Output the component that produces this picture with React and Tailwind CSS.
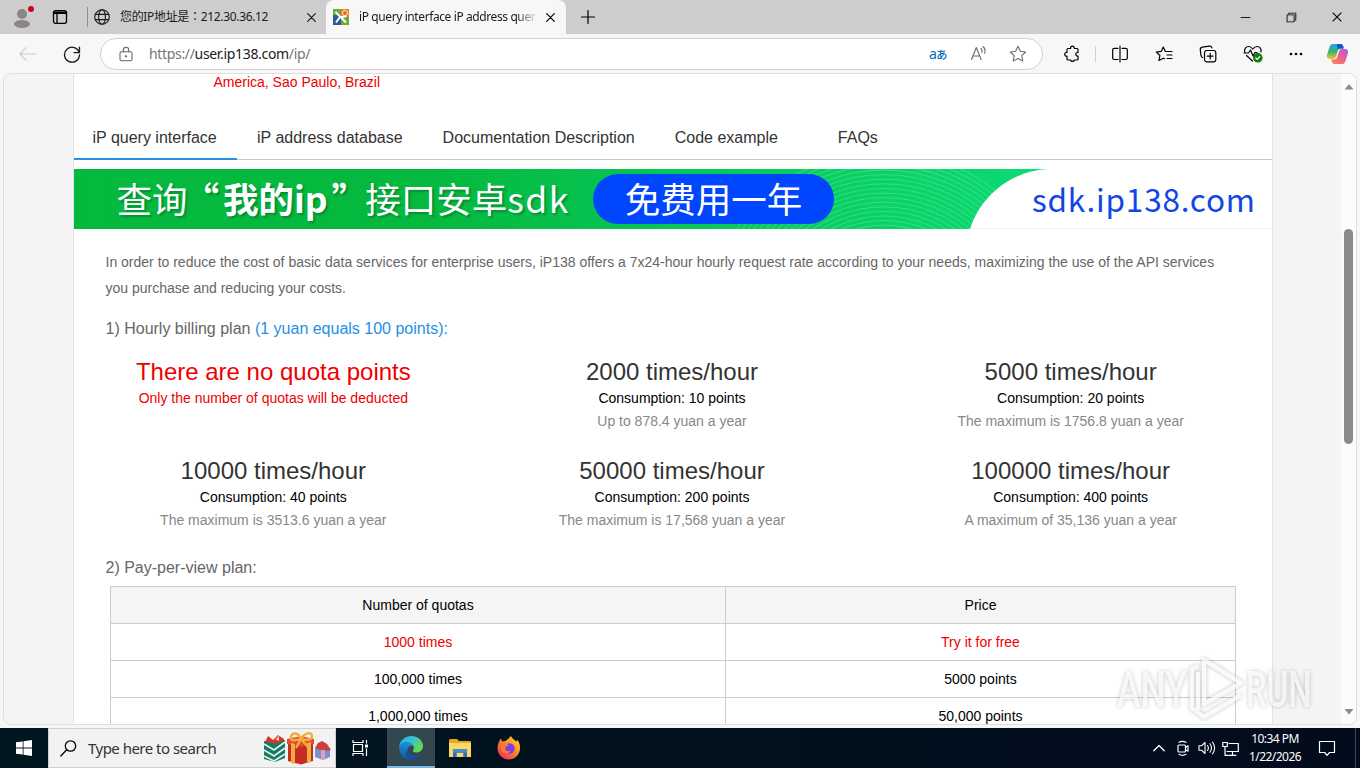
import React from 'react';
import {
  VscChromeMinimize,
  VscChromeRestore,
  VscChromeClose,
} from 'react-icons/vsc';

const navItems = ['iP query interface', 'iP address database', 'Documentation Description', 'Code example', 'FAQs'];

const plans = [
  { title: 'There are no quota points', cost: 'Only the number of quotas will be deducted', free: true },
  { title: '2000 times/hour', cost: 'Consumption: 10 points', max: 'Up to 878.4 yuan a year' },
  { title: '5000 times/hour', cost: 'Consumption: 20 points', max: 'The maximum is 1756.8 yuan a year' },
  { title: '10000 times/hour', cost: 'Consumption: 40 points', max: 'The maximum is 3513.6 yuan a year' },
  { title: '50000 times/hour', cost: 'Consumption: 200 points', max: 'The maximum is 17,568 yuan a year' },
  { title: '100000 times/hour', cost: 'Consumption: 400 points', max: 'A maximum of 35,136 yuan a year' },
];

const quotas = [
  { count: '1000 times', price: 'Try it for free', free: true },
  { count: '100,000 times', price: '5000 points' },
  { count: '1,000,000 times', price: '50,000 points' },
];

// radii of the thin arcs drawn on the right half of the banner
const waves = Array.from({ length: 20 }, (_, i) => 92 + i * 4.6);

function Line({ size = 20, className = '', width = 1.2, box = 20, children }) {
  return (
    <svg
      width={size}
      height={size}
      viewBox={`0 0 ${box} ${box}`}
      fill="none"
      stroke="currentColor"
      strokeWidth={width}
      strokeLinecap="round"
      strokeLinejoin="round"
      className={`block shrink-0 ${className}`}
    >
      {children}
    </svg>
  );
}

function TabBar() {
  return (
    <div className="flex h-[34px] bg-[#cdcdcd] text-[#1b1b1b] font-['Noto_Sans','Noto_Sans_CJK_TC',sans-serif] text-xs">
      <div className="flex w-[88px] items-center pl-3">
        <svg width="24" height="26" viewBox="0 0 24 26" className="block">
          <circle cx="10" cy="10" r="5" fill="#8b8684" />
          <ellipse cx="10" cy="20" rx="8" ry="4" fill="#8b8684" />
          <circle cx="19" cy="5" r="3" fill="#d0021b" />
        </svg>
        <Line size={16} box={16} width={1.3} className="ml-4 text-black">
          <rect x="1.5" y="1.7" width="13" height="12.6" rx="2" />
          <path d="M1.5 3.2h13M1.8 4.4h12.4M5 5v9" />
        </Line>
      </div>
      <div className="flex w-[238px] items-center rounded-br-lg">
        <span className="h-5 w-px shrink-0 bg-[#8f8f8f] -ml-px" />
        <Line size={16} box={16} width={1.1} className="ml-[6px]">
          <circle cx="8" cy="8" r="7.3" />
          <ellipse cx="8" cy="8" rx="3.4" ry="7.3" />
          <path d="M1.3 5.4h13.4M1.3 10.6h13.4" />
        </Line>
        <span className="ml-[10px] w-[180px] whitespace-nowrap tracking-[-0.33px]">您的IP地址是：212.30.36.12</span>
        <Line size={9} box={9} width={1.2} className="ml-[7px]">
          <path d="M.7.7l7.6 7.6M8.3.7L.7 8.3" />
        </Line>
      </div>
      <div className="flex w-[240px] items-center rounded-t-lg bg-[#f7f7f7] pl-[7px]">
        <svg width="16" height="16" viewBox="0 0 16 16" className="block shrink-0">
          <path fill="#6cab35" d="M0 0h9v8H0z" />
          <path fill="#285a9c" d="M0 6h8v10H0z" />
          <path fill="#6cab35" d="M8 8h8v8H8z" />
          <path fill="#ef7d2c" d="M8 0h8v8H8z" />
          <path stroke="#fff" strokeWidth="2" d="M2.5 3l4 4 6.5 6.5M7 8l-4 5.5M7.5 8.5l6-1.5" fill="none" />
          <circle cx="12" cy="4" r="2.6" fill="#ef6b22" stroke="#fff" strokeWidth=".8" />
        </svg>
        <span className="ml-[10px] w-[179px] whitespace-nowrap tracking-[-0.4px] [mask-image:linear-gradient(to_right,black_88%,transparent)]">
          iP query interface iP address quer
        </span>
        <Line size={9} box={9} width={1.2} className="ml-[8px] text-black">
          <path d="M.7.7l7.6 7.6M8.3.7L.7 8.3" />
        </Line>
      </div>
      <div className="flex flex-1 items-center pl-[15px]">
        <Line size={14} box={14} width={1.2} className="text-black">
          <path d="M7 .5v13M.5 7h13" />
        </Line>
      </div>
      <div className="flex items-center gap-[32px] pr-4 text-sm text-black">
        <VscChromeMinimize />
        <VscChromeRestore />
        <VscChromeClose />
      </div>
    </div>
  );
}

function Toolbar() {
  return (
    <div className="flex h-[39px] items-center bg-[#f7f7f7] text-[#1b1b1b]">
      <Line size={18} className="ml-[19px] text-[#c9c9c9]">
        <path d="M19 10H1M8 3l-7 7 7 7" />
      </Line>
      <Line size={18} width={1.5} className="ml-[26px]">
        <path d="M18 8.5A8.3 8.3 0 1 0 18.3 11M18.3 2.5v6h-6" />
      </Line>
      <div className="ml-[19px] flex h-8 w-[943px] shrink-0 items-center rounded-full border border-[#d2d2d2] bg-white pl-[18px] font-['Noto_Sans',sans-serif] text-sm">
        <Line size={14} box={14} width={1.1} className="h-4 text-[#666]">
          <rect x="1" y="4.8" width="12" height="9" rx="1.6" />
          <path d="M4.3 4.8V3a2.7 2.7 0 0 1 5.4 0v1.8" />
          <circle cx="7" cy="9.3" r=".6" fill="currentColor" />
        </Line>
        <span className="ml-4 flex-1 whitespace-nowrap tracking-[-0.33px] text-[#767676]">
          https://<span className="text-[#1b1b1b]">user.ip138.com</span>/ip/
        </span>
        <span className="w-[41px] text-[14px] leading-none tracking-[-0.7px] text-[#0067c0] font-['Noto_Sans','Noto_Sans_CJK_JP',sans-serif]">
          a<span className="text-[11px] font-medium">あ</span>
        </span>
        <Line size={17} box={17} width={1.1} className="text-[#6b6b6b]">
          <path d="M1.5 14.5L6.3 2.5l4.8 12M3 11h6.5M11 3.5q1.6 1.5 1 4M13 1.5q3 2.8 1.6 6.8" />
        </Line>
        <Line size={18} width={1.2} className="ml-[22px] mr-[15px] text-[#6b6b6b]">
          <path d="M10 1.5l2.6 5.5 6 .8-4.4 4.1 1.1 6-5.3-2.9-5.3 2.9 1.1-6L1.4 7.800l6-.8z" />
        </Line>
      </div>
      <Line size={18} box={18} width={1.2} className="ml-5 text-black">
        <path d="M5 3.5h2.600a1.900 1.900 0 1 1 3.700 0H14a1 1 0 0 1 1 1V7.500h-.8a1.900 1.900 0 0 0 0 3.700h.8V14a1 1 0 0 1-1 1h-2.700a1.900 1.900 0 0 1-3.700 0H5a1 1 0 0 1-1-1v-2.800a1.900 1.900 0 1 1 0-3.700v-3a1 1 0 0 1 1-1z" />
      </Line>
      <span className="ml-[14px] h-4 w-px bg-[#cfcfcf]" />
      <Line size={18} box={18} width={1.2} className="ml-[15px] text-black">
        <path d="M9 1v16M7 3.300H3.200a1.500 1.500 0 0 0-1.500 1.500v8.200a1.500 1.500 0 0 0 1.500 1.500H7M11 3.300h3.800a1.500 1.500 0 0 1 1.500 1.500v8.200a1.500 1.500 0 0 1-1.500 1.500H11" />
      </Line>
      <Line size={18} box={18} width={1.2} className="ml-[26px] text-black">
        <path d="M10.500 6.500h6.500M12 10h5M12 13.500h5M10.300 6.500L8.300 2 6.200 6.400l-4.900.7 3.600 3.400-.9 5 4.300-2.300 1.200.6" />
      </Line>
      <Line size={18} box={18} width={1.2} className="ml-[26px] text-black">
        <rect x="5.500" y="5.500" width="11.300" height="11.300" rx="2.200" />
        <path d="M11.200 8.300v5.700M8.300 11.200h5.700M3.400 12.600A3 3 0 0 1 2 10.700L1.300 5A2.500 2.500 0 0 1 3.400 2.200l6.900-1a2.500 2.500 0 0 1 2.700 1.700" />
      </Line>
      <Line size={20} box={20} width={1.2} className="ml-[26px] text-black">
        <path d="M1.800 8.500C.8 5 3 2.500 5.700 2.500c2 0 3.300 1.500 4.100 2.500.8-1 2.200-2.500 4.300-2.500 2.500 0 4.700 2.500 3.800 5.500M3.500 11.500l6 5.500M1 9h4.500l2-3 2.500 6 2-3.500h2" />
        <circle cx="14.800" cy="13.800" r="4.200" fill="#107c10" stroke="#107c10" />
        <path d="M12.800 14l1.400 1.400 2.600-2.700" stroke="#fff" />
      </Line>
      <svg width="14" height="4" viewBox="0 0 14 4" className="ml-[26px] block shrink-0">
        <circle cx="2" cy="2" r="1.300" /><circle cx="7" cy="2" r="1.300" /><circle cx="12" cy="2" r="1.300" />
      </svg>
      <svg width="23" height="22" viewBox="0 0 23 22" className="ml-[23px] block shrink-0">
        <defs>
          <linearGradient id="cpa" x1="0" y1="0" x2="0" y2="1">
            <stop offset="0" stopColor="#1aa6e8" />
            <stop offset=".5" stopColor="#3bb56a" />
            <stop offset="1" stopColor="#f6c32b" />
          </linearGradient>
          <linearGradient id="cpb" x1="1" y1="0" x2="0" y2="1">
            <stop offset="0" stopColor="#a45cf0" />
            <stop offset=".5" stopColor="#f0618f" />
            <stop offset="1" stopColor="#fb8a3c" />
          </linearGradient>
        </defs>
        <path d="M7 1h7.500q2 0 2.600 2l.6 2.500h-3q-2 0-2.700 2L9.800 14q-.7 2-2.600 2H4Q.4 16 1 12L3.500 4Q4.500 1 7 1z" fill="url(#cpa)" />
        <path d="M11 1h3.500q2 0 2.600 2l.7 2.500h-3.300q-2 0-2.700 1z" fill="#1c4fd0" />
        <path d="M16 21H8.500q-2 0-2.600-2l-.6-2.500h3q2 0 2.700-2L13.200 8q.7-2 2.600-2H19q3.600 0 3 4l-2.500 8q-1 3-3.500 3z" fill="url(#cpb)" />
      </svg>
    </div>
  );
}

function Banner() {
  return (
    <div className="relative mt-[9px] h-[60px] overflow-hidden bg-linear-to-r from-[#05b93f] from-30% to-[#0cda73] to-80% font-['Noto_Sans_CJK_SC',sans-serif] text-[35.5px] leading-[56px] whitespace-nowrap">
      <svg width="1198" height="60" viewBox="0 0 1198 60" className="absolute inset-0">
        <g fill="none" stroke="#7af0ae" strokeOpacity=".5" strokeWidth=".8">
          {waves.map((r) => (
            <circle key={r} cx="810" cy="162" r={r} />
          ))}
        </g>
        <path d="M896 60C906 28 936 2 974 0h224v60z" fill="#fff" />
        <path d="M897 59.500h301" stroke="#f3f3f3" />
      </svg>
      <div className="relative flex h-full items-center text-white">
        <div className="-mt-0.5 ml-[42.5px] w-[476.5px] [text-shadow:2px_2px_2px_rgba(0,90,30,0.45)]">
          查询
          <span className="font-bold">
            <span className="-ml-[4px] mr-[4px]">“</span>我的ip<span className="ml-[4px] -mr-[2px]">”</span>
          </span>
          接口安卓<span className="tracking-[1.5px]">sdk</span>
        </div>
        <div className="h-[50px] w-[241px] rounded-full bg-[#0146ff] text-center leading-[48px]">免费用一年</div>
        <div className="-mt-0.5 ml-[198px] text-[31.5px] tracking-[0.8px] text-[#1145e6]">sdk.ip138.com</div>
      </div>
    </div>
  );
}

function PageContent() {
  return (
    <div className="ml-[69px] w-[1200px] shrink-0 overflow-hidden border-x border-[#e3e3e3] bg-white">
      <p className="h-[42px] pl-[139.5px] text-sm leading-[17px] text-[#e00]">America, Sao Paulo, Brazil</p>
      <ul className="flex h-[44px] border-b border-[#c9c9c9] text-base leading-[43px] text-[#333]">
        {navItems.map((item, i) => (
          <li
            key={item}
            className={
              i === 0
                ? 'h-[44px] w-[163px] border-b-2 border-[#2590e5] pl-[18.5px]'
                : 'h-[43px] min-w-[120px] px-5 text-center'
            }
          >
            {item}
          </li>
        ))}
      </ul>
      <Banner />
      <p className="mt-5 pr-[50px] pl-[31.5px] text-sm leading-[26px] text-[#666]">
        In order to reduce the cost of basic data services for enterprise users, iP138 offers a 7x24-hour hourly request rate according to your needs, maximizing the use of the API services you purchase and reducing your costs.
      </p>
      <h3 className="mt-[18px] pl-[31.5px] text-base leading-[20px] text-[#666]">
        1) Hourly billing plan <span className="text-[#2590e5]">(1 yuan equals 100 points):</span>
      </h3>
      <div className="mt-[17px] grid w-[1196px] grid-cols-3 text-center text-sm">
        {plans.map((p) => (
          <div key={p.title} className="h-[99px]">
            <div className={p.free ? 'text-2xl leading-[32px] text-[#e00]' : 'text-2xl leading-[32px] text-[#333]'}>{p.title}</div>
            <div className={p.free ? 'leading-[20px] text-[#e00]' : 'leading-[20px] text-black'}>{p.cost}</div>
            <div className="leading-[26px] text-[#888]">{p.max}</div>
          </div>
        ))}
      </div>
      <h3 className="mt-[4px] pl-[31.5px] text-base leading-[20px] text-[#666]">2) Pay-per-view plan:</h3>
      <table className="mt-[8px] ml-[36px] w-[1126px] table-fixed border-collapse text-center text-sm text-black">
        <thead>
          <tr className="h-[37px] bg-[#f5f5f5]">
            <th className="w-[615px] border border-[#ccc] font-normal">Number of quotas</th>
            <th className="border border-[#ccc] font-normal">Price</th>
          </tr>
        </thead>
        <tbody>
          {quotas.map((q) => (
            <tr key={q.count} className={q.free ? 'h-[37px] text-[#e00]' : 'h-[37px]'}>
              <td className="border border-[#ccc]">{q.count}</td>
              <td className="border border-[#ccc]">{q.price}</td>
            </tr>
          ))}
        </tbody>
      </table>
    </div>
  );
}

function Scrollbar() {
  return (
    <div className="ml-auto flex w-[15px] flex-col items-center bg-[#fcfcfc]">
      <svg width="10" height="6" viewBox="0 0 10 6" className="mt-[10px] block"><path d="M5 0l4.500 5.500h-9z" fill="#8b8b8b" /></svg>
      <div className="mt-[139px] h-[215px] w-[9px] rounded-full bg-[#8b8b8b]" />
      <svg width="10" height="6" viewBox="0 0 10 6" className="mt-auto mb-[9px] block"><path d="M5 5.500L.5 0h9z" fill="#8b8b8b" /></svg>
    </div>
  );
}

function Watermark() {
  return (
    <div className="absolute top-[652px] left-[1113px] opacity-80">
      <svg width="220" height="72" viewBox="0 0 220 72" className="block overflow-visible [filter:drop-shadow(0_0_2px_rgba(0,0,0,0.35))]">
        <g fill="#ffffff" fillOpacity=".8" fontFamily="Roboto, sans-serif" fontSize="50" fontWeight="500">
          <text transform="translate(4 55) scale(.71 1)">ANY</text>
          <text transform="translate(133 55) scale(.66 1)">RUN</text>
        </g>
        <g fill="none" stroke="#fff" strokeOpacity=".85" strokeWidth="4.500" strokeLinejoin="round">
          <path d="M91 8v44l37-21z" />
          <path d="M85 14l-6 3v39l12 9 37-22M85 20v38" />
        </g>
      </svg>
    </div>
  );
}

function Gifts() {
  return (
    <svg width="70" height="34" viewBox="0 0 70 34" className="block">
      <path d="M2 11l3-6 5 4 5-5 6 4v6H2z" fill="#d4372d" />
      <path d="M8 6l5 2 3-4v6z" fill="#f3c9a6" />
      <path d="M1 10l11 3 10-4v18l-10 4-11-3z" fill="#157a65" />
      <path d="M1 13l10 6 11-8M1 19l10 6 11-8M1 25l10 5 11-7" fill="none" stroke="#dff0e6" strokeWidth="1.800" />
      <path d="M25 10l13-3 12 3v20l-12 3.500L25 30z" fill="#c72c22" />
      <path d="M24 8l14-3 13 3v5l-13 2.500L24 13z" fill="#e34b34" />
      <path d="M28 12l4 1v20l-4-1zM44 12l4-1v20l-4 1z" fill="#efae3c" />
      <path d="M38 8c-3-7-9-7-10-2s6 3 10 2c4 1 11 2 11-3s-8-3-11 3l-5 9M38 8l7 8" fill="none" stroke="#efae3c" strokeWidth="2.500" />
      <path d="M52 17l8-2 7 3v8l-7 3-8-3z" fill="#7e8fd0" />
      <path d="M52 17l3-5 4-2 5 3 4 6-8 1z" fill="#cf3d3c" />
      <path d="M58 19h4v10h-4z" fill="#d9a0c0" />
    </svg>
  );
}

function Taskbar() {
  return (
    <div className="flex h-10 items-center bg-linear-to-r from-[#001720] to-[#020b1c] text-white font-['Noto_Sans',sans-serif]">
      <div className="flex w-12 justify-center">
        <svg width="16" height="16" viewBox="0 0 16 16" fill="#fff" className="block">
          <path d="M0 2.300l6.700-.9v6.200H0zM7.500 1.300L16 0v7.600H7.500zM0 8.400h6.700v6.200L0 13.700zM7.500 8.400H16V16l-8.500-1.300z" />
        </svg>
      </div>
      <div className="flex h-full w-[288px] items-center border border-[#d0d0d0] bg-[#f2f2f2] text-[#333]">
        <Line size={17} box={17} width={1.3} className="ml-[11px] text-black">
          <circle cx="10.500" cy="6" r="5.200" />
          <path d="M6.700 9.800L.8 16" />
        </Line>
        <span className="ml-[11px] w-[175px] whitespace-nowrap text-[15px] tracking-[-0.52px]">Type here to search</span>
        <Gifts />
      </div>
      <div className="flex w-[51px] justify-center">
        <svg width="17" height="16" viewBox="0 0 17 16" fill="none" stroke="#fff" strokeWidth="1.200" className="block -ml-[3px]">
          <path d="M1 0v2.500h10V0M1.500 4.500h9v7h-9zM1 16v-2.500h10V16M14.500 0v3.500M14.500 8.500V16" />
          <path d="M13 4.500h3v3h-3z" fill="#fff" stroke="none" />
        </svg>
      </div>
      <div className="flex h-full w-12 items-center justify-center border-b-2 border-[#76b9ed] bg-[#33474f] pt-[2px]">
        <svg width="24" height="24" viewBox="0 0 24 24" className="block">
          <defs>
            <linearGradient id="ea" x1="0" y1="0" x2="1" y2=".5">
              <stop offset="0" stopColor="#2aa8e0" />
              <stop offset=".5" stopColor="#35c1d8" />
              <stop offset="1" stopColor="#66d950" />
            </linearGradient>
            <linearGradient id="eb" x1="0" y1="0" x2="0" y2="1">
              <stop offset="0" stopColor="#1c8fe0" />
              <stop offset="1" stopColor="#0c59a4" />
            </linearGradient>
          </defs>
          <path d="M.3 10.500C1 4.500 6 0 12 0c7 0 12 4.800 12 10 0 4-3 6.500-6.500 6.500-3 0-4-1.200-3.600-2 .8-1 1.400-2 .8-3.700C13.500 7.500 9.500 6 6 6.500c-2.500.4-4.500 1.700-5.700 4z" fill="url(#ea)" />
          <path d="M.2 10C1.500 7.500 4 6.300 7 6.300c3.500 0 6.500 1.500 7.500 4-1.500-1-4-.8-5.200 1-2 3 0 7.700 4.200 8.800 2.700.7 5.500 0 8.200-1.200C19.700 22 16 24 12 24 5 24-.5 18 .2 10z" fill="url(#eb)" />
          <path d="M8.300 13.500c-.4 5 4.200 8.500 9.400 7.200 1.500-.4 2.700-1 4-1.800C19.500 22.300 16 24 12.500 24 7 23 5.500 16.500 8.300 13.500z" fill="#1a4a9a" />
        </svg>
      </div>
      <svg width="22" height="19" viewBox="0 0 22 19" className="ml-[14px] block">
        <path d="M0 1.500Q0 0 1.500 0H8l2 2h11q1 0 1 1v13H0z" fill="#e9a820" />
        <path d="M0 4h22v14H0z" fill="#ffd667" />
        <path d="M4 10h14v8h-3.500v-4h-7v4H4z" fill="#3d8fd0" />
        <path d="M4 13.500h3.500V18H4zM14.500 13.500H18V18h-3.500z" fill="#2c74b8" />
      </svg>
      <svg width="24" height="24" viewBox="0 0 24 24" className="ml-[26px] block">
        <defs>
          <linearGradient id="ff" x1="1" y1="0" x2=".2" y2="1">
            <stop offset="0" stopColor="#ffe226" />
            <stop offset=".5" stopColor="#ff8a2a" />
            <stop offset="1" stopColor="#f02c5e" />
          </linearGradient>
        </defs>
        <path d="M14 0c1 3 4 3.500 5 5.500L20.500 4C22.500 7 23.500 10 23 13.500 22 19.500 17.500 23.500 12 23.500 5.500 23.500.500 18.500.500 12.500.500 8.500 2 5 4 2.500l1 3 3.500-.5C10 4 11 3 14 0z" fill="url(#ff)" />
        <circle cx="12.500" cy="12.500" r="5.200" fill="#7a3fe0" />
        <path d="M4 8c3-2 6-1 8 1.500-2 0-3 1-4 2.500 0 3 3 4 6 2.500-2 4-8 4-10-.5z" fill="#ff7a2a" />
      </svg>
      <div className="ml-auto flex items-center">
        <Line size={12} box={12} width={1.3}>
          <path d="M.8 8.800L6 3.500l5.200 5.300" />
        </Line>
        <Line size={16} box={16} width={1.2} className="ml-[10px]">
          <rect x="3" y="5" width="7.500" height="7" rx="1" />
          <path d="M10.500 7.500L13 5.800v5.400l-2.500-1.500M4 2.300q3.500-2 7 0M4 14.300q3.500 2 7 0" />
        </Line>
        <Line size={18} box={18} width={1.1} className="ml-[7px]">
          <path d="M1 6.800h2.500L7 3.500v11l-3.500-3.300H1zM9.500 6.500q1.800 2.500 0 5M12 4.700q3 4.300 0 8.600M14.500 3q4.200 6 0 12" />
        </Line>
        <Line size={17} box={17} width={1.2} className="ml-[6px]">
          <path d="M7 3.500h9.300v8H5M10.500 11.500v3.500M7 15.300h7M.8 2.500h4.500v4H.8zM3 6.500v8.800h3" />
        </Line>
        <div className="ml-[6px] w-[60px] text-center text-xs leading-[18px] whitespace-nowrap tracking-[-0.55px]">
          <div>10:34 PM</div>
          <div>1/22/2026</div>
        </div>
        <Line size={18} box={18} width={1.2} className="mr-[19px] ml-[13px]">
          <path d="M1.500 2.500h15v11h-5L9 16.300l-2.300-2.800H1.500z" />
        </Line>
        <span className="h-10 w-px bg-[#3c4654] mr-1" />
      </div>
    </div>
  );
}

export default function App() {
  return (
    <div className="relative h-[768px] w-[1360px] overflow-hidden bg-[#f7f7f7]">
      <TabBar />
      <Toolbar />
      <div className="mx-[3px] mb-[3px] flex h-[652px] overflow-hidden rounded-lg border border-[#dedede] bg-[#f4f4f4] font-['Liberation_Sans',Arial,sans-serif]">
        <PageContent />
        <Scrollbar />
      </div>
      <Taskbar />
      <Watermark />
    </div>
  );
}
